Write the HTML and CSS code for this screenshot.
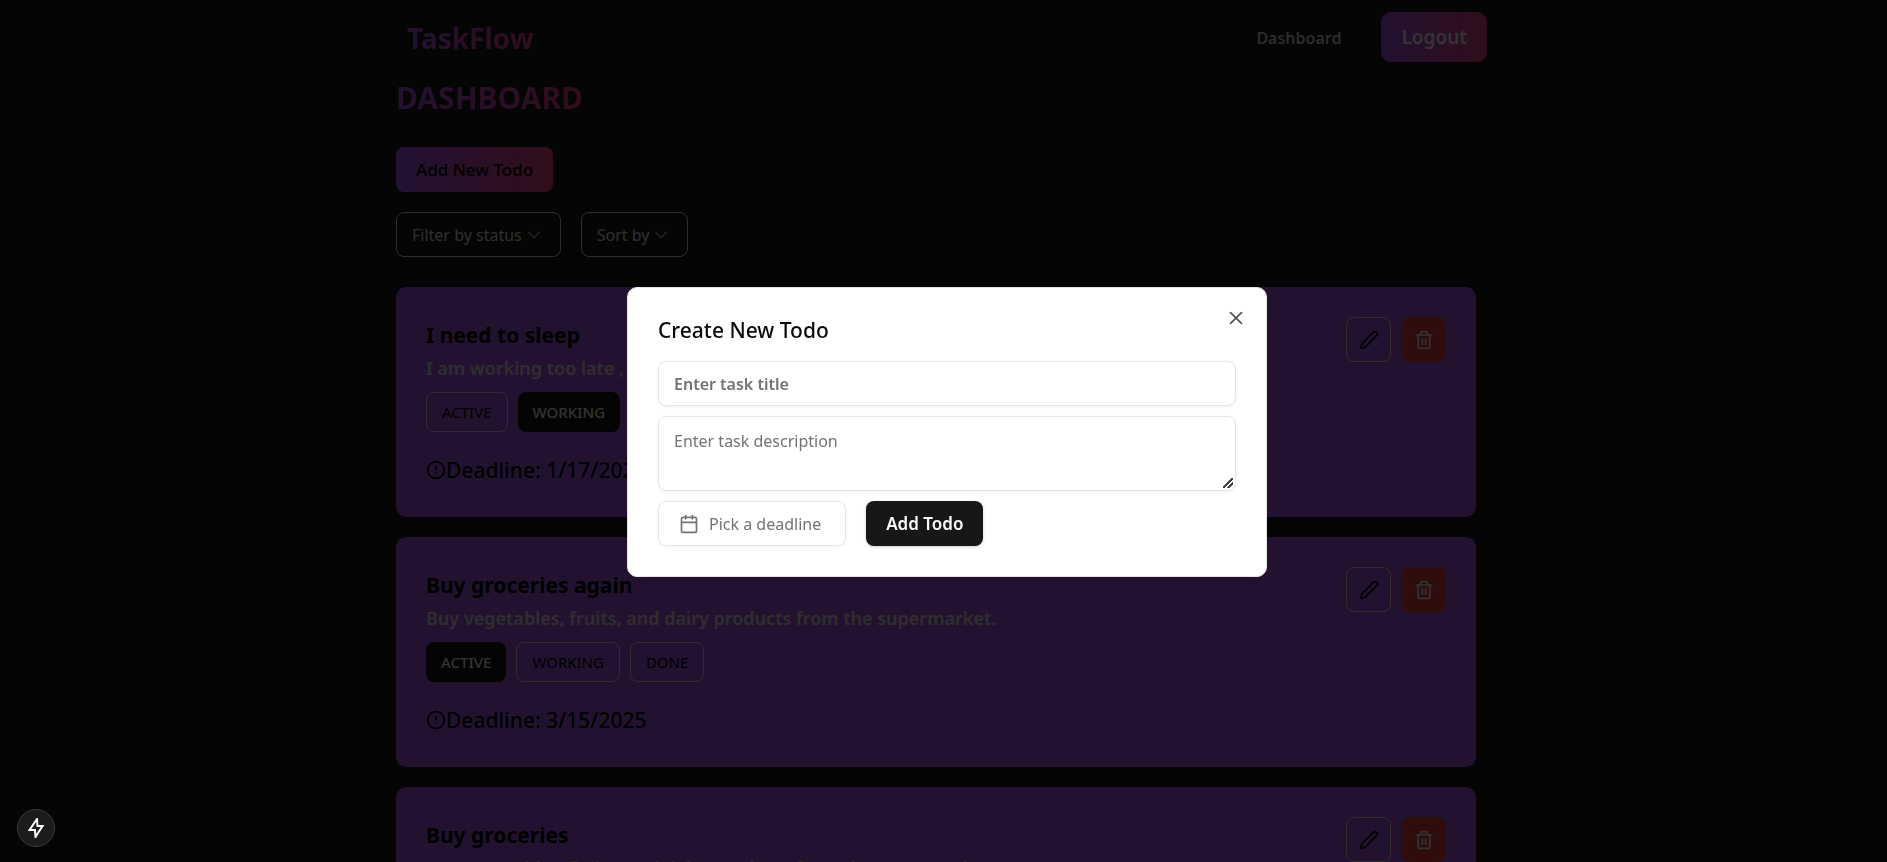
FILE: index.html
```html
<!DOCTYPE html>
<html lang="en">
<head>
<meta charset="utf-8">
<meta name="viewport" content="width=device-width, initial-scale=1">
<title>TaskFlow</title>
<link rel="stylesheet" href="styles.css">
</head>
<body>
<svg class="sprite" aria-hidden="true">
  <symbol id="pencil" viewBox="0 0 24 24"><path d="M21.174 6.812a1 1 0 0 0-3.986-3.987L3.842 16.174a2 2 0 0 0-.5.83l-1.321 4.352a.5.5 0 0 0 .623.622l4.353-1.32a2 2 0 0 0 .83-.497z"/></symbol>
  <symbol id="trash" viewBox="0 0 24 24"><path d="M3 6h18M19 6v14a2 2 0 0 1-2 2H7a2 2 0 0 1-2-2V6M8 6V4a2 2 0 0 1 2-2h4a2 2 0 0 1 2 2v2M10 11v6M14 11v6"/></symbol>
  <symbol id="alert" viewBox="0 0 24 24"><circle cx="12" cy="12" r="10"/><path d="M12 8v4M12 16h.01"/></symbol>
  <symbol id="chevron" viewBox="0 0 24 24"><path d="m4 8 8 8 8-8"/></symbol>
  <symbol id="calendar" viewBox="0 0 24 24"><path d="M8 2v4M16 2v4M3 10h18"/><rect x="3" y="4" width="18" height="18" rx="2"/></symbol>
  <symbol id="close" viewBox="0 0 24 24"><path d="M18.500 5.500l-13 13M5.500 5.500l13 13"/></symbol>
</svg>

<header class="topbar">
  <nav class="nav">
    <a class="logo gradient-text" href="#">TaskFlow</a>
    <div class="nav-links">
      <a class="nav-link" href="#">Dashboard</a>
      <button class="logout" type="button">Logout</button>
    </div>
  </nav>
</header>

<main class="main">
  <div class="content">
    <h1 class="heading gradient-text">DASHBOARD</h1>
    <button class="add-new" type="button">Add New Todo</button>
    <div class="filters">
      <button class="filter" type="button">Filter by status<svg class="icon-chevron"><use href="#chevron"/></svg></button>
      <button class="filter" type="button">Sort by<svg class="icon-chevron"><use href="#chevron"/></svg></button>
    </div>
    <div class="cards">
      <article class="card">
        <div class="card-body">
          <h2 class="card-title">I need to sleep</h2>
          <p class="card-text">I am working too late , I need to sleep</p>
          <div class="statuses">
            <button class="status" type="button">ACTIVE</button>
            <button class="status status-on" type="button">WORKING</button>
            <button class="status" type="button">DONE</button>
          </div>
          <p class="deadline"><svg class="icon"><use href="#alert"/></svg>Deadline: 1/17/2025</p>
        </div>
        <div class="actions">
          <button class="action" type="button" aria-label="Edit"><svg class="icon"><use href="#pencil"/></svg></button>
          <button class="action action-delete" type="button" aria-label="Delete"><svg class="icon"><use href="#trash"/></svg></button>
        </div>
      </article>
      <article class="card">
        <div class="card-body">
          <h2 class="card-title">Buy groceries again</h2>
          <p class="card-text">Buy vegetables, fruits, and dairy products from the supermarket.</p>
          <div class="statuses">
            <button class="status status-on" type="button">ACTIVE</button>
            <button class="status" type="button">WORKING</button>
            <button class="status" type="button">DONE</button>
          </div>
          <p class="deadline"><svg class="icon"><use href="#alert"/></svg>Deadline: 3/15/2025</p>
        </div>
        <div class="actions">
          <button class="action" type="button" aria-label="Edit"><svg class="icon"><use href="#pencil"/></svg></button>
          <button class="action action-delete" type="button" aria-label="Delete"><svg class="icon"><use href="#trash"/></svg></button>
        </div>
      </article>
      <article class="card">
        <div class="card-body">
          <h2 class="card-title">Buy groceries</h2>
          <p class="card-text">Buy vegetables, fruits, and dairy products from the supermarket.</p>
          <div class="statuses">
            <button class="status status-on" type="button">ACTIVE</button>
            <button class="status" type="button">WORKING</button>
            <button class="status" type="button">DONE</button>
          </div>
          <p class="deadline"><svg class="icon"><use href="#alert"/></svg>Deadline: 3/15/2025</p>
        </div>
        <div class="actions">
          <button class="action" type="button" aria-label="Edit"><svg class="icon"><use href="#pencil"/></svg></button>
          <button class="action action-delete" type="button" aria-label="Delete"><svg class="icon"><use href="#trash"/></svg></button>
        </div>
      </article>
    </div>
  </div>
</main>

<div class="overlay">
  <form class="modal" role="dialog" aria-modal="true" aria-labelledby="modal-title">
    <h2 class="modal-title" id="modal-title">Create New Todo</h2>
    <button class="close" type="button" aria-label="Close"><svg class="icon"><use href="#close"/></svg></button>
    <div class="fields">
      <input class="field field-title" type="text" placeholder="Enter task title" aria-label="Task title">
      <textarea class="field field-text" placeholder="Enter task description" aria-label="Task description"></textarea>
      <div class="form-row">
        <button class="pick" type="button"><svg class="icon"><use href="#calendar"/></svg>Pick a deadline</button>
        <button class="submit" type="submit">Add Todo</button>
      </div>
    </div>
  </form>
</div>

<button class="badge" type="button" aria-label="Static route">
  <svg class="bolt" viewBox="0 0 16 20"><path d="M9 1 1.500 12H7L7.500 19 14.500 8H9.500Z"/></svg>
</button>
</body>
</html>
```

FILE: styles.css
```css
*,
*::before,
*::after {
  box-sizing: border-box;
}

body {
  margin: 0;
  height: 100vh;
  overflow: hidden;
  background: #191919;
  color: #000;
  font-family: "Noto Sans", "Open Sans", sans-serif;
  font-size: 16px;
}

button,
input,
textarea {
  font: inherit;
  color: inherit;
}

button {
  display: inline-flex;
  align-items: center;
  justify-content: center;
  border: 0;
  padding: 0;
  background: none;
  white-space: nowrap;
  cursor: pointer;
}

h1,
h2,
p {
  margin: 0;
}

a {
  text-decoration: none;
}

.sprite {
  position: absolute;
  width: 0;
  height: 0;
}

.icon,
.icon-chevron {
  width: 20px;
  height: 20px;
  flex: none;
  fill: none;
  stroke: currentColor;
  stroke-width: 2;
  stroke-linecap: round;
  stroke-linejoin: round;
}

.icon-chevron {
  width: 16px;
  height: 16px;
  margin-left: 4px;
  opacity: 0.7;
}

.gradient-text {
  background: linear-gradient(to right, #a855f7, #f04484);
  background-clip: text;
  color: transparent;
}

.topbar {
  padding: 12px 0 12px 7px;
}

.nav {
  display: flex;
  align-items: center;
  justify-content: space-between;
  max-width: 1080px;
  margin: 0 auto;
}

.logo {
  padding-top: 2px;
  font-size: 28px;
  line-height: 40px;
  font-weight: 700;
}

.nav-links {
  display: flex;
  align-items: center;
  gap: 40px;
}

.nav-link {
  padding-top: 2px;
  color: #d4d4d4;
  font-weight: 600;
}

.logout {
  height: 50px;
  padding: 0 20px;
  border-radius: 10px;
  background: linear-gradient(to right, #a855f7, #f04484);
  color: #fff;
  font-size: 19px;
  font-weight: 600;
}

.main {
  padding-right: 15px;
}

.content {
  max-width: 1080px;
  margin: 0 auto;
}

.heading {
  width: fit-content;
  margin: 4px 0 29px;
  font-size: 30px;
  line-height: 40px;
  font-weight: 700;
}

.add-new {
  height: 45px;
  padding: 0 20px;
  border-radius: 8px;
  background: linear-gradient(to right, #a855f7, #f04484);
  font-size: 17px;
  font-weight: 500;
}

.filters {
  display: flex;
  gap: 20px;
  margin: 20px 0 30px;
}

.filter {
  height: 45px;
  padding: 0 18px 0 15px;
  border: 1px solid #e5e5e5;
  border-radius: 8px;
  color: #e5e5e5;
}

.cards {
  display: flex;
  flex-direction: column;
  gap: 20px;
}

.card {
  display: flex;
  justify-content: space-between;
  padding: 30px;
  border-radius: 10px;
  background: #b05aec;
}

.card-title {
  font-size: 21px;
  line-height: 36px;
  font-weight: 700;
}

.card-text {
  color: #e5e5e5;
  font-size: 18px;
  line-height: 30px;
  font-weight: 600;
}

.statuses {
  display: flex;
  gap: 10px;
  margin: 9px 0 21px;
}

.status {
  height: 40px;
  padding: 0 15px;
  border: 1px solid #e5e5e5;
  border-radius: 8px;
  font-size: 15px;
}

.status-on {
  border: 0;
  background: #171717;
  color: #fafafa;
  font-weight: 500;
}

.deadline {
  display: flex;
  align-items: center;
  font-size: 21px;
  line-height: 34px;
  font-weight: 500;
}

.actions {
  display: flex;
  gap: 10px;
}

.action {
  width: 45px;
  height: 45px;
  border: 1px solid #e5e5e5;
  border-radius: 8px;
}

.action-delete {
  border: 0;
  background: #ef4444;
  color: #fafafa;
}

.overlay {
  position: fixed;
  inset: 0;
  display: flex;
  align-items: center;
  justify-content: center;
  padding: 2px 0 0 7px;
  background: rgba(0, 0, 0, 0.8);
}

.modal {
  position: relative;
  width: 640px;
  max-width: 100%;
  padding: 30px;
  border: 1px solid #e5e5e5;
  border-radius: 10px;
  background: #fff;
  color: #0a0a0a;
  box-shadow: 0 12px 18px -4px rgba(0, 0, 0, 0.1);
}

.modal-title {
  font-size: 21px;
  line-height: 25px;
  font-weight: 500;
}

.close {
  position: absolute;
  top: 20px;
  right: 20px;
  opacity: 0.7;
}

.fields {
  display: flex;
  flex-direction: column;
  gap: 10px;
  margin-top: 18px;
}

.field {
  display: block;
  width: 100%;
  border: 1px solid #e5e5e5;
  border-radius: 8px;
  background: transparent;
  box-shadow: 0 1px 3px rgba(0, 0, 0, 0.06);
}

.field::placeholder {
  color: #737373;
  opacity: 1;
}

.field-title {
  height: 45px;
  padding: 0 15px;
  font-weight: 600;
}

.field-text {
  height: 75px;
  padding: 12px 15px;
  line-height: 25px;
  resize: vertical;
}

.field-text::-webkit-resizer {
  background: linear-gradient(135deg, transparent 43%, #444 44% 56%, transparent 57% 68%, #444 69% 81%, transparent 82%) 3px 3px / 10px 10px no-repeat;
}

.form-row {
  display: flex;
  gap: 20px;
}

.pick {
  height: 45px;
  padding: 0 24px 0 20px;
  gap: 10px;
  border: 1px solid #e5e5e5;
  border-radius: 8px;
  color: #737373;
  box-shadow: 0 1px 3px rgba(0, 0, 0, 0.06);
}

.submit {
  height: 45px;
  padding: 0 20px;
  border-radius: 8px;
  background: #171717;
  color: #fafafa;
  font-size: 17px;
  font-weight: 600;
  box-shadow: 0 1px 3px rgba(0, 0, 0, 0.2);
}

.badge {
  position: fixed;
  left: 17px;
  bottom: 15px;
  width: 38px;
  height: 38px;
  border: 1px solid #3c3c3e;
  border-radius: 50%;
  background: #1c1c1e;
}

.bolt {
  width: 16px;
  height: 20px;
  fill: none;
  stroke: #fff;
  stroke-width: 2;
}
```
